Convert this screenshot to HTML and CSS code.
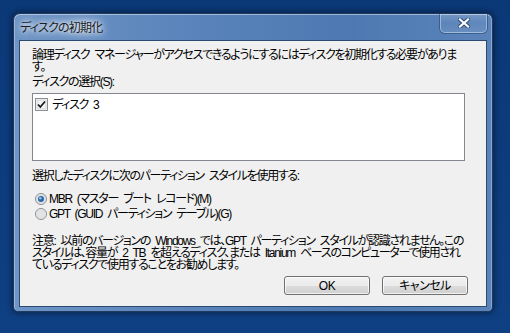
FILE: index.html
```html
<!DOCTYPE html>
<html lang="ja">
<head>
    <meta charset="UTF-8">
    <title>ディスクの初期化</title>
    <link rel="stylesheet" href="styles.css">
</head>
<body>
    <div class="window">
        <div class="titlebar">
            <span class="title">ディスクの初期化</span>
            <div class="close-btn">
                <svg width="12" height="10" viewBox="0 0 12 10">
                    <path d="M2 1.5 L10 8.5 M10 1.5 L2 8.5" stroke="#2a4a76" stroke-width="4" stroke-linecap="square"/>
                    <path d="M2 1.5 L10 8.5 M10 1.5 L2 8.5" stroke="#fff" stroke-width="2.2" stroke-linecap="square"/>
                </svg>
            </div>
        </div>

        <div class="client">
            <p class="text-block">論理ディスク マネージャーがアクセスできるようにするにはディスクを初期化する必要がありま<br>す。</p>
            <div class="field-label">ディスクの選択(S):</div>

            <div class="disk-list">
                <div class="disk-item">
                    <svg class="checkbox" width="13" height="13" viewBox="0 0 13 13">
                        <rect x="0.5" y="0.5" width="12" height="12" fill="#fff" stroke="#8e8f8f"/>
                        <rect x="2" y="2" width="9" height="9" fill="#f4f4f4" stroke="#d2d4d6"/>
                        <path d="M3 6.5 L5.3 9 L10 3.5" fill="none" stroke="#1c1c1c" stroke-width="1.8"/>
                    </svg>
                    <span>ディスク 3</span>
                </div>
            </div>

            <div class="style-label">選択したディスクに次のパーティション スタイルを使用する:</div>
            <div class="radio-group">
                <div class="radio-row">
                    <svg class="radio" width="12" height="12" viewBox="0 0 12 12">
                        <circle cx="6" cy="6" r="5.5" fill="#f0f0f0" stroke="#8a8c8e"/>
                        <circle cx="6" cy="6" r="4.2" fill="#e6e8ea" stroke="#cfd2d6" stroke-width="0.8"/>
                        <circle cx="6" cy="6" r="3" fill="#2a66a8"/>
                        <circle cx="5.3" cy="5.2" r="1.3" fill="#8ec2ee"/>
                    </svg>
                    <span>MBR (マスター ブート レコード)(M)</span>
                </div>
                <div class="radio-row">
                    <svg class="radio" width="12" height="12" viewBox="0 0 12 12">
                        <circle cx="6" cy="6" r="5.5" fill="#f4f4f4" stroke="#8a8c8e"/>
                        <circle cx="6" cy="6" r="4.2" fill="#e2e4e6" stroke="#d6d8da" stroke-width="0.8"/>
                    </svg>
                    <span>GPT (GUID パーティション テーブル)(G)</span>
                </div>
            </div>

            <p class="text-block note">注意: 以前のバージョンの Windows では、GPT パーティション スタイルが認識されません。この<br>スタイルは、容量が 2 TB を超えるディスク、または Itanium ベースのコンピューターで使用され<br>ているディスクで使用することをお勧めします。</p>

            <div class="buttons">
                <div class="btn">OK</div>
                <div class="btn">キャンセル</div>
            </div>
        </div>
    </div>
</body>
</html>
```

FILE: styles.css
```css
* {
    margin: 0;
    padding: 0;
    box-sizing: border-box;
}

html, body {
    width: 510px;
    height: 333px;
    overflow: hidden;
}

body {
    background: linear-gradient(to bottom, #0b3877, #0f4083);
    font-family: "Liberation Sans", "Noto Sans CJK JP", sans-serif;
    font-size: 12px;
    line-height: 12px;
    font-feature-settings: "palt";
    letter-spacing: -1.3px;
    word-spacing: 3px;
    color: #000;
}

.window {
    margin: 13px 0 0 13px;
    width: 480px;
    height: 299px;
    display: flex;
    flex-direction: column;
    padding: 0 5px 4px 5px;
    border: 1px solid #1d3960;
    border-radius: 7px 7px 5px 5px;
    background: linear-gradient(to right, #6e95c6 0%, #5a84bb 35%, #4d78b1 70%, #5a84ba 100%);
    box-shadow: 0 0 6px 1px rgba(0, 0, 0, 0.45), inset 0 1px 0 rgba(255, 255, 255, 0.45), inset 1px 0 0 rgba(255, 255, 255, 0.3), inset -1px 0 0 rgba(255, 255, 255, 0.3);
}

.titlebar {
    height: 26px;
    display: flex;
    align-items: flex-start;
}

.title {
    margin: 8px 0 0 1px;
    letter-spacing: -0.8px;
    color: #1e1e1e;
    text-shadow: 0 0 5px #fff, 0 0 9px rgba(255, 255, 255, 0.9), 0 0 14px rgba(255, 255, 255, 0.7);
}

.close-btn {
    margin-left: auto;
    width: 47px;
    height: 19px;
    display: flex;
    justify-content: center;
    align-items: center;
    border: 1px solid rgba(200, 218, 240, 0.55);
    border-top: none;
    border-radius: 0 0 5px 5px;
    background: linear-gradient(to bottom, rgba(255, 255, 255, 0.18), rgba(255, 255, 255, 0.04) 50%, rgba(255, 255, 255, 0.1));
    box-shadow: 0 0 0 1px rgba(25, 50, 90, 0.45);
}

.client {
    flex: 1;
    display: flex;
    flex-direction: column;
    padding: 8px 21px 0 12px;
    background-color: #f0f0f0;
    border: 1px solid #2b4a72;
}

.text-block {
    white-space: nowrap;
}

.field-label {
    margin-top: 3px;
}

.disk-list {
    margin-top: 5px;
    height: 68px;
    padding: 4px 2px;
    background-color: #fff;
    border: 1px solid #828790;
}

.disk-item {
    display: flex;
    align-items: center;
    gap: 4px;
}

.style-label {
    margin-top: 9px;
    white-space: nowrap;
}

.radio-group {
    margin-top: 9px;
    padding-left: 3px;
}

.radio-row {
    height: 15px;
    display: flex;
    align-items: center;
    gap: 2px;
}

.note {
    margin-top: 14px;
}

.buttons {
    margin-top: 5px;
    margin-right: -3px;
    display: flex;
    justify-content: flex-end;
    gap: 12px;
}

.btn {
    width: 86px;
    height: 19px;
    display: flex;
    justify-content: center;
    align-items: center;
    border: 1px solid #707070;
    border-radius: 3px;
    background: linear-gradient(to bottom, #f2f2f2 0%, #ebebeb 50%, #dddddd 51%, #cfcfcf 100%);
    box-shadow: inset 0 0 0 1px rgba(255, 255, 255, 0.7);
    letter-spacing: -0.5px;
}
```
